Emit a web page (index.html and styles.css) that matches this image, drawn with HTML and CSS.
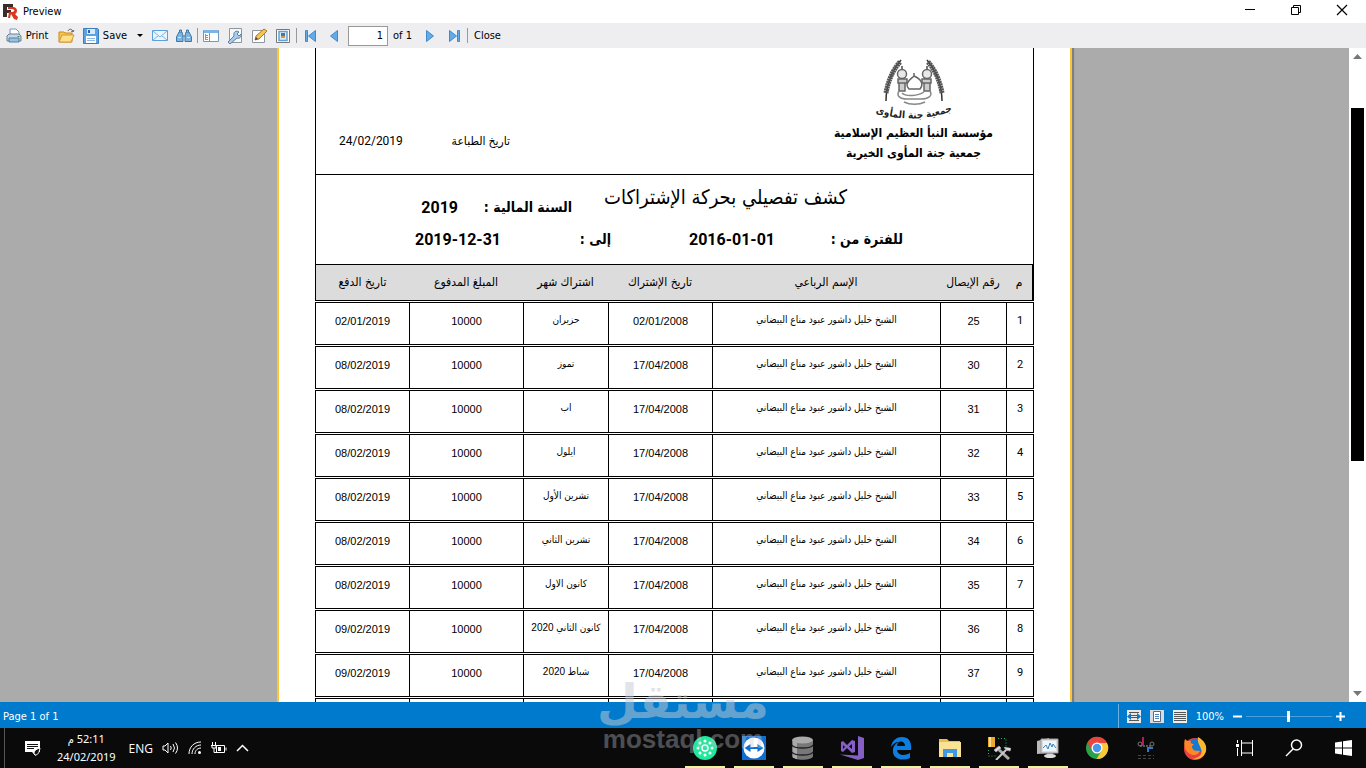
FILE: index.html
```html
<!DOCTYPE html>
<html lang="en">
<head>
  <meta charset="UTF-8">
  <meta name="viewport" content="width=device-width, initial-scale=1.0">
  <title>Preview</title>
  <link rel="stylesheet" href="styles.css">
</head>
<body>
  <!-- Window title -->
  <header class="titlebar">
    <svg class="app-icon" width="16" height="16" viewBox="0 0 16 16"><path d="M0 0h10v3H4v3h4v3H4v4H0z" fill="#3b2b2b"/><path d="M5 3h5c5 0 5 6 2 7l3 3-1 3-3-1-3-5-1 4H5l1-6h3c3 0 3-3 0-3H5z" fill="#d9381e"/></svg>
    <h1>Preview</h1>
    <div class="window-buttons">
      <button aria-label="Minimize"><svg width="12" height="12" viewBox="0 0 12 12"><path d="M1 5.500h10" stroke="#000"/></svg></button>
      <button aria-label="Restore"><svg width="12" height="12" viewBox="0 0 12 12" fill="none" stroke="#000"><path d="M1.500 3.500h7v7h-7zM3.500 3.500v-2h7v7h-2"/></svg></button>
      <button aria-label="Close window"><svg width="12" height="12" viewBox="0 0 12 12"><path d="M1 1l10 10M11 1L1 11" stroke="#000" stroke-width="1.200"/></svg></button>
    </div>
  </header>

  <!-- Preview toolbar -->
  <div class="toolbar">
    <button class="tool-wide">
      <svg width="16" height="16" viewBox="0 0 16 16"><path d="M4 7V1h6l3 3v3" fill="#fff" stroke="#6a9cc8"/><path d="M1 8l2-2h10l2 2v5H1z" fill="#c9d6e2" stroke="#6c7f92"/><path d="M3 10h10v4H3z" fill="#8cc4ec" stroke="#5f7d99"/><path d="M11.500 8.500h2" stroke="#3d9b4a"/></svg>
      Print
    </button>
    <button class="tool" aria-label="Open"><svg width="17" height="16" viewBox="0 0 17 16"><path d="M1 14V4h5l1 1h7v9z" fill="#f7c551" stroke="#c98a1c"/><path d="M1 14l3-7h12l-3 7z" fill="#ffe08a" stroke="#d9982c"/><path d="M10 3c1-3 5-2 5 1M13 3l2 1 1-2" fill="none" stroke="#666"/></svg></button>
    <button class="tool-wide">
      <svg width="16" height="16" viewBox="0 0 16 16"><path d="M.5.5h14l1 1v14H.5z" fill="#5ba3e4" stroke="#3c7cc0"/><path d="M4 1h8v5H4z" fill="#d8ebfb"/><path d="M5 2h2v3H5z" fill="#2c62a8"/><path d="M3 8h10v7H3z" fill="#fff"/><path d="M4 10.500h8M4 12.500h8" stroke="#8cb8e2"/></svg>
      Save
    </button>
    <button class="tool-arrow" aria-label="Save options"><svg width="6" height="3" viewBox="0 0 6 3"><path d="M0 0h6L3 3z"/></svg></button>
    <button class="tool" aria-label="Send"><svg width="16" height="16" viewBox="0 0 16 16"><path d="M.5 2.500h15v10H.5z" fill="#eaf5fd" stroke="#5c9fda"/><path d="M1 3l7 6 7-6M1 12l5-4M15 12l-5-4" fill="none" stroke="#7ab3e2"/></svg></button>
    <button class="tool" aria-label="Find"><svg width="16" height="16" viewBox="0 0 16 16" fill="#7fb4de" stroke="#3f78ab"><path d="M.5 13.500V9L3 4h3l1 4v5.500zM9 13.500V8l1-4h3l2.500 5v4.500z"/><path d="M3.500 4V2h2v2M10.500 4V2h2v2M7 8h2"/><path d="M2 9.500h3M11 9.500h3" stroke="#d0e8f8"/></svg></button>
    <span class="tool-sep"></span>
    <button class="tool" aria-label="Outline"><svg width="16" height="16" viewBox="0 0 16 16"><path d="M.5 2.500h15v11H.5z" fill="#fff" stroke="#7298bd"/><path d="M1 2h14v3H1z" fill="#7db4e6"/><path d="M6.500 5v8" stroke="#7298bd"/><path d="M2.500 6v6M3 7.500h2M3 9.500h2M3 11.500h2" stroke="#8a98a5"/></svg></button>
    <button class="tool" aria-label="Page settings"><svg width="16" height="16" viewBox="0 0 16 16"><path d="M2.500.5h12v14h-12z" fill="#f6f8fa" stroke="#8f979e"/><path d="M1 14l6-6c-1-4 2-6 5-4L10 6l2 2 2-2c1 3-2 5-4 4l-7 6z" fill="#a9cdec" stroke="#5d7e9e"/></svg></button>
    <button class="tool" aria-label="Edit page"><svg width="16" height="16" viewBox="0 0 16 16"><path d="M1.500 2.500h12v12h-12z" fill="#fff" stroke="#8f979e"/><path d="M4 12l1-4 8-7 3 2-8 8z" fill="#f8c64c" stroke="#a8782a"/><path d="M4 12l1-3 2 2z" fill="#444"/></svg></button>
    <button class="tool" aria-label="Watermark"><svg width="14" height="16" viewBox="0 0 14 16"><path d="M.5 1.500h13v13H.5z" fill="#fff" stroke="#777"/><path d="M3 3.500h8v9H3z" fill="#d9ecfa" stroke="#64a0d4" stroke-width="1.500"/><path d="M5 5h4v3H5z" fill="#4a75a0"/><path d="M5 8h4v2H5z" fill="#d59b36"/></svg></button>
    <span class="tool-sep"></span>
    <button class="tool" aria-label="First page"><svg width="11" height="12" viewBox="0 0 11 12" fill="#63aae8" stroke="#4189cc"><path d="M.5.5h2v11h-2zM10.500.5v11L3.500 6z"/></svg></button>
    <button class="tool" aria-label="Previous page"><svg width="8" height="12" viewBox="0 0 8 12"><path d="M7.500.5v11L.5 6z" fill="#63aae8" stroke="#4189cc"/></svg></button>
    <input class="page-number" id="pageNumber" type="text" value="1">
    <label class="page-total" for="pageNumber">of 1</label>
    <button class="tool" aria-label="Next page"><svg width="8" height="12" viewBox="0 0 8 12"><path d="M.5.5v11l7-5.500z" fill="#63aae8" stroke="#4189cc"/></svg></button>
    <button class="tool" aria-label="Last page"><svg width="11" height="12" viewBox="0 0 11 12" fill="#63aae8" stroke="#4189cc"><path d="M8.500.5h2v11h-2zM.5.5v11l7-5.500z"/></svg></button>
    <span class="tool-sep"></span>
    <button class="tool-close">Close</button>
  </div>

  <!-- Report page -->
  <main class="viewer">
    <div class="canvas">
      <div class="paper">
        <article class="report" lang="ar" dir="rtl">
          <section class="report-head">
            <div class="organisation">
              <svg width="78" height="62" viewBox="0 0 78 62" fill="none" stroke="#666">
                <path d="M26 1C17 12 11 26 11 42M52 1c9 11 15 25 15 41" stroke="#333" stroke-width="1.500"/>
                <path d="M25 3C17 12 13 23 11 34M53 3c8 9 12 20 14 31" stroke="#555" stroke-width="5" stroke-dasharray="2 .5"/>
                <path d="M27 7v3M52 7v3" stroke="#777" stroke-width="2"/>
                <circle cx="27" cy="15" r="4.500" fill="#e8e8e8" stroke-width="1.500"/><circle cx="52" cy="15" r="4.500" fill="#e8e8e8" stroke-width="1.500"/>
                <path d="M23 20h9v4h-9zM47 20h9v4h-9zM24 24v8h6v-8M49 24v8h6v-8" fill="#ccc" stroke-width="1.500"/>
                <path d="M39 14v3c-3 3-7 5-7 9 0 2 1 3 2 4h11c4-5 1-10-6-13" stroke-width="1.500"/>
                <path d="M24 32c-3 5 1 8 8 8h14c7 0 12-3 9-8M27 34c4 4 16 3 22-1M29 43c6 3 15 3 21 0" stroke="#888" stroke-width="1.500"/>
                <path id="logoArc" d="M-4 52Q39 68 82 50" stroke="none"/>
                <text class="logo-text" fill="#222" stroke="none" text-anchor="middle"><textPath href="#logoArc" startOffset="50%">جمعية جنة المأوى</textPath></text>
              </svg>
              <p>مؤسسة النبأ العظيم الإسلامية</p>
              <p>جمعية جنة المأوى الخيرية</p>
            </div>
            <div class="print-date">
              <span>تاريخ الطباعة</span>
              <span>24/02/2019</span>
            </div>
          </section>

          <section class="report-title">
            <div class="title-row">
              <h2>كشف تفصيلي بحركة الإشتراكات</h2>
              <b>السنة المالية :</b>
              <b class="value">2019</b>
            </div>
            <div class="period-row">
              <b>للفترة من :</b>
              <b class="value"><bdi dir="ltr">2016-01-01</bdi></b>
              <b>إلى :</b>
              <b class="value"><bdi dir="ltr">2019-12-31</bdi></b>
            </div>
          </section>

          <table class="payments">
            <colgroup>
              <col class="col-index"><col class="col-receipt"><col class="col-name"><col class="col-joined"><col class="col-month"><col class="col-amount"><col class="col-paid">
            </colgroup>
            <thead>
              <tr><th>م</th><th>رقم الإيصال</th><th>الإسم الرباعي</th><th>تاريخ الإشتراك</th><th>اشتراك شهر</th><th>المبلغ المدفوع</th><th>تاريخ الدفع</th></tr>
            </thead>
            <tbody>
              <tr><td>1</td><td>25</td><td>الشيخ خليل داشور عبود مناع البيضاني</td><td>02/01/2008</td><td>حزيران</td><td>10000</td><td>02/01/2019</td></tr>
              <tr><td>2</td><td>30</td><td>الشيخ خليل داشور عبود مناع البيضاني</td><td>17/04/2008</td><td>تموز</td><td>10000</td><td>08/02/2019</td></tr>
              <tr><td>3</td><td>31</td><td>الشيخ خليل داشور عبود مناع البيضاني</td><td>17/04/2008</td><td>اب</td><td>10000</td><td>08/02/2019</td></tr>
              <tr><td>4</td><td>32</td><td>الشيخ خليل داشور عبود مناع البيضاني</td><td>17/04/2008</td><td>ايلول</td><td>10000</td><td>08/02/2019</td></tr>
              <tr><td>5</td><td>33</td><td>الشيخ خليل داشور عبود مناع البيضاني</td><td>17/04/2008</td><td>تشرين الأول</td><td>10000</td><td>08/02/2019</td></tr>
              <tr><td>6</td><td>34</td><td>الشيخ خليل داشور عبود مناع البيضاني</td><td>17/04/2008</td><td>تشرين الثاني</td><td>10000</td><td>08/02/2019</td></tr>
              <tr><td>7</td><td>35</td><td>الشيخ خليل داشور عبود مناع البيضاني</td><td>17/04/2008</td><td>كانون الاول</td><td>10000</td><td>08/02/2019</td></tr>
              <tr><td>8</td><td>36</td><td>الشيخ خليل داشور عبود مناع البيضاني</td><td>17/04/2008</td><td>كانون الثاني 2020</td><td>10000</td><td>09/02/2019</td></tr>
              <tr><td>9</td><td>37</td><td>الشيخ خليل داشور عبود مناع البيضاني</td><td>17/04/2008</td><td>شباط 2020</td><td>10000</td><td>09/02/2019</td></tr>
              <tr><td></td><td></td><td></td><td></td><td></td><td></td><td></td></tr>
            </tbody>
          </table>
        </article>
      </div>
    </div>
    <div class="scrollbar">
      <svg width="9" height="5" viewBox="0 0 9 5"><path d="M0 5h9L4.500 0z" fill="#777"/></svg>
      <span class="scroll-thumb"></span>
      <svg width="9" height="5" viewBox="0 0 9 5"><path d="M0 0h9L4.500 5z" fill="#777"/></svg>
    </div>
  </main>

  <!-- Status bar -->
  <footer class="statusbar">
    <span>Page 1 of 1</span>
    <div class="zoom-tools">
      <button aria-label="Page width"><svg width="14" height="13" viewBox="0 0 14 13"><path d="M0 0h14v13H0z" fill="#e8e8e8"/><path d="M2 2.500h10M4 5.500h6M4 7.500h6M2 10.500h10" stroke="#555"/><path d="M0 6.500L4 3v7zM14 6.500L10 3v7z" fill="#1474c4"/></svg></button>
      <button aria-label="Whole page"><svg width="14" height="13" viewBox="0 0 14 13"><path d="M0 0h14v13H0z" fill="#d4dde6"/><path d="M3.500 1.500h7v10h-7z" fill="#fff" stroke="#667"/><path d="M5 4.500h4M5 6.500h4M5 8.500h4" stroke="#4c7fb5"/></svg></button>
      <button aria-label="Actual size"><svg width="14" height="13" viewBox="0 0 14 13"><path d="M0 0h14v13H0z" fill="#eee"/><path d="M1 2.500h12M1 4.500h12M1 6.500h12M1 8.500h12M1 10.500h12" stroke="#555"/></svg></button>
      <label for="zoomRange">100%</label>
      <button class="zoom-step" aria-label="Zoom out"><svg width="9" height="9" viewBox="0 0 9 9"><path d="M0 4.500h9" stroke="#fff" stroke-width="2"/></svg></button>
      <input id="zoomRange" type="range" min="0" max="200" value="98">
      <button class="zoom-step" aria-label="Zoom in"><svg width="9" height="9" viewBox="0 0 9 9"><path d="M0 4.500h9M4.500 0v9" stroke="#fff" stroke-width="2"/></svg></button>
    </div>
  </footer>

  <!-- Windows taskbar -->
  <nav class="taskbar">
    <div class="tray">
      <button class="tray-notes" aria-label="Notifications"><svg width="18" height="17" viewBox="0 0 18 17"><path d="M1 1h15v11h-4v4l-4-4H1z" fill="#fff"/><path d="M3 4.500h11M3 6.500h11M3 8.500h7" stroke="#111"/><path d="M10 14c0-4 3-5 6-6-1 5-2 7-5 7z" fill="#111" stroke="#fff"/></svg></button>
      <div class="clock">
        <span dir="rtl">52:11 م</span>
        <span>24/02/2019</span>
      </div>
      <span class="language">ENG</span>
      <button aria-label="Volume"><svg width="17" height="14" viewBox="0 0 17 14" fill="none" stroke="#fff"><path d="M1 5h2l3-3v10L3 9H1zM8.500 5q1.500 2 0 4M11 3q3 4 0 8M13.500 1.500q4 5.500 0 11"/></svg></button>
      <button aria-label="Network"><svg width="14" height="14" viewBox="0 0 14 14" fill="none" stroke="#fff"><path d="M1 13C1 6 6 1 13 1M4 13c0-5 4-9 9-9M7 13c0-4 3-6 6-6"/><circle cx="11.500" cy="11.500" r="1.500" fill="#fff" stroke="none"/></svg></button>
      <button aria-label="Battery"><svg width="16" height="13" viewBox="0 0 16 13" fill="none" stroke="#fff"><path d="M5.500 3.500h8v7h-8zM15 5.500v3M1.500 0v3M4.500 0v3M0 3.500h6M1 4v2h4V4M3 6v4.500h3"/><path d="M7 5h3v4H7z" fill="#fff" stroke="none"/></svg></button>
      <button aria-label="Hidden icons"><svg width="13" height="8" viewBox="0 0 13 8"><path d="M1 7l5.500-5.500L12 7" fill="none" stroke="#fff" stroke-width="1.500"/></svg></button>
    </div>
    <div class="apps">
      <button class="running" aria-label="Contacts"><svg width="24" height="24" viewBox="0 0 24 24"><circle cx="12" cy="12" r="12" fill="#21e89c"/><circle cx="12" cy="12" r="3" fill="none" stroke="#fff" stroke-width="1.500"/><path d="M12 5v0M17 7v0M19 12v0M17 17v0M12 19v0M7 17v0M5 12v0M7 7v0" stroke="#fff" stroke-width="3" stroke-linecap="round"/></svg></button>
      <button class="running" aria-label="TeamViewer"><svg width="24" height="24" viewBox="0 0 24 24"><path d="M0 0h24v24H0z" fill="#0f6fd0"/><circle cx="12" cy="12" r="10.500" fill="#fff"/><path d="M2.500 12l6-4v3h7V8l6 4-6 4v-3h-7v3z" fill="#0f6fd0"/></svg></button>
      <button class="running" aria-label="Database"><svg width="24" height="24" viewBox="0 0 24 24"><path d="M1 4v16c0 5 21 5 21 0V4z" fill="#777"/><path d="M3 5v17M5 6v17" stroke="#ddd"/><ellipse cx="11.500" cy="4" rx="10.500" ry="3.500" fill="#aaa"/><path d="M1 9c2 4 19 4 21 0M1 16c2 4 19 4 21 0" fill="none" stroke="#222" stroke-width="1.500"/></svg></button>
      <button class="running" aria-label="Visual Studio"><svg width="24" height="24" viewBox="0 0 24 24" fill="#865fc5"><path d="M18 0l6 2v20l-6 2-18-5.500 18 1zM1 6l2-1 4 4 5-5 3 1v11l-3 1-5-5-4 4-2-1zm2 3v4l2-2zm9-1L9 10.500l3 2.500z" fill-rule="evenodd"/></svg></button>
      <button class="running" aria-label="Edge"><svg width="24" height="24" viewBox="0 0 24 24"><path d="M2 11C3 4 8 1 13 1c7 0 10 5 9 13H8c1 6 8 6 13 3v5C12 26 3 22 4 14c0-4 3-7 6-8C6 6 4 8 2 11zm6-1h8c0-6-8-6-8 0z" fill="#0c7ee0" fill-rule="evenodd"/></svg></button>
      <button class="running" aria-label="File Explorer"><svg width="24" height="24" viewBox="0 0 24 24"><path d="M1 3h8l2 2h11v16H1z" fill="#e8bf4c"/><path d="M1 6h22v15H1z" fill="#f9e293"/><path d="M5 21v-8h14v8h-4v-4H9v4z" fill="#3e98e2"/></svg></button>
      <button class="running" aria-label="Database tools"><svg width="24" height="24" viewBox="0 0 24 24"><path d="M1 1h7v10H1z" fill="#eca92e"/><path d="M3 1v10" stroke="#ffdf8e" stroke-width="2"/><path d="M11 2.500h8v8M1.500 14v6h8" stroke="#38a968" fill="none" stroke-dasharray="1 2"/><path d="M10 12l12 11" stroke="#aaa" stroke-width="3"/><path d="M9 24l11-11" stroke="#c9c9c9" stroke-width="2"/><path d="M7 14l5-4 2 2-5 4zM17 11l2 3 4 1 1-3" fill="#ddd" stroke="#999"/></svg></button>
      <button class="running" aria-label="Performance monitor"><svg width="24" height="24" viewBox="0 0 24 24"><path d="M1 5l12-3v15l-12 1z" fill="#bbb"/><path d="M5 3h17v14H5z" fill="#ddd" stroke="#999"/><path d="M7 5h13v10H7z" fill="#edf5fb"/><path d="M7 12l3-3 2 4 2-6 2 4 1-3 3 4" fill="none" stroke="#3c83c4"/><path d="M11 17h6l1 3h-8z" fill="#999"/><ellipse cx="14" cy="20" rx="6" ry="2" fill="#ddd"/></svg></button>
      <button aria-label="Chrome"><svg width="24" height="24" viewBox="0 0 24 24"><circle cx="12" cy="12" r="11" fill="#2ba14b"/><path d="M2.500 6.500a11 11 0 0 1 19.500.5H12l-5 8z" fill="#e8453c"/><path d="M22 7a11 11 0 0 1-10.500 16L17 14l-2-7z" fill="#fbc934"/><circle cx="12" cy="12" r="5.500" fill="#fff"/><circle cx="12" cy="12" r="4.200" fill="#4598ee"/></svg></button>
      <button aria-label="Snipping tool"><svg width="24" height="24" viewBox="0 0 24 24" fill="none"><path d="M9 1v9" stroke="#b41b52" stroke-width="2"/><path d="M6 10h12" stroke="#555" stroke-width="2" stroke-dasharray="2 1"/><circle cx="6" cy="8" r="2" stroke="#777"/><circle cx="18" cy="8" r="2" stroke="#777"/><path d="M14 16v-4h5" stroke="#287bd0" stroke-width="2"/><path d="M4 19.500h16M4 22.500h16" stroke="#444" stroke-dasharray="3 2"/></svg></button>
      <button aria-label="Firefox"><svg width="24" height="24" viewBox="0 0 24 24"><circle cx="12" cy="13" r="11" fill="#ec3f42"/><circle cx="13" cy="10" r="7.500" fill="#1679d4"/><path d="M15 1c7 4 9 9 8 14-2 7-8 9-14 8 8-1 11-6 9-10-1-4-4-6-3-12z" fill="#ffb72e"/><path d="M2 3c2 2 3 2 6 2-1 2 0 3 3 3-2 2-3 3-1 5 2 3 5 1 7 2-2 4-6 5-10 3-5-3-7-9-5-15z" fill="#ff8825"/></svg></button>
      <button class="white-icon" aria-label="Task view"><svg width="18" height="18" viewBox="0 0 18 18" fill="none" stroke="#fff"><path d="M1.500 1v3M1.500 9v8" /><path d="M0 5h3v3H0z" fill="#fff" stroke="none"/><path d="M5.500 1v3h11V1M5.500 4v10M16.500 4v10M5.500 17v-3h11v3"/></svg></button>
      <button class="white-icon" aria-label="Search"><svg width="18" height="18" viewBox="0 0 18 18" fill="none" stroke="#fff" stroke-width="1.500"><circle cx="11.500" cy="6" r="5"/><path d="M8 10l-7 7"/></svg></button>
      <button class="white-icon" aria-label="Start"><svg width="17" height="16" viewBox="0 0 17 16" fill="#fff"><path d="M0 2.500L7 1.500v6H0zM8 1.300L17 0v7.500H8zM0 8.500h7v6l-7-1zM8 8.500h9V16l-9-1.300z"/></svg></button>
    </div>
  </nav>

  <!-- Site watermark -->
  <div class="watermark">
    <span lang="ar">مستقل</span>
    <span>mostaql.com</span>
  </div>
</body>
</html>
```
FILE: styles.css
```css
* {
  margin: 0;
  padding: 0;
  box-sizing: border-box;
}

body {
  font-family: "DejaVu Sans Condensed", "DejaVu Sans", sans-serif;
  font-size: 11px;
  color: #000;
  display: flex;
  flex-direction: column;
  height: 100vh;
  overflow: hidden;
  position: relative;
}

button {
  font: inherit;
  color: inherit;
  background: none;
  border: none;
  display: flex;
  align-items: center;
  justify-content: center;
}

svg {
  flex: none;
}

/* Title bar */
.titlebar {
  height: 23px;
  background-color: white;
  display: flex;
  align-items: center;
  padding-left: 3px;
}

.titlebar h1 {
  font-size: 11px;
  font-weight: normal;
  margin-left: 4px;
}

.window-buttons {
  display: flex;
  align-self: flex-start;
  margin-left: auto;
  padding-right: 1px;
}

.window-buttons button {
  width: 46px;
  height: 20px;
}

/* Toolbar */
.toolbar {
  height: 25px;
  background-color: #eeeef0;
  display: flex;
  align-items: center;
}

.tool-wide {
  width: 54px;
  gap: 4px;
}

.tool {
  width: 24px;
  height: 24px;
}

.tool-arrow {
  width: 16px;
  height: 24px;
}

.tool-sep {
  width: 1px;
  height: 15px;
  margin: 0 1px;
  background-color: #999;
}

.page-number {
  width: 40px;
  height: 20px;
  margin-left: 2px;
  padding-right: 4px;
  border: 1px solid #999;
  background-color: white;
  font: inherit;
  text-align: right;
}

.page-total {
  width: 30px;
  padding-left: 5px;
}

.tool-close {
  padding: 0 5px;
}

/* Viewer */
.viewer {
  flex: 1;
  min-height: 0;
  display: flex;
}

.canvas {
  flex: 1;
  display: flex;
  justify-content: center;
  align-items: flex-start;
  background-color: #ababab;
  overflow: hidden;
}

.paper {
  width: 100%;
  max-width: 795px;
  padding: 0 36px;
  background-color: white;
  border: solid #fdc536;
  border-width: 0 2px;
  box-shadow: 2px 0 1px #808080;
}

.scrollbar {
  width: 17px;
  background-color: white;
  display: flex;
  flex-direction: column;
  align-items: center;
  padding: 6px 0;
}

.scroll-thumb {
  width: 13px;
  height: 55%;
  margin: 49px 0 auto;
  background-color: black;
}

/* Report */
.report-head,
.report-title {
  border: solid black;
  border-width: 0 1px 1px;
}

.report-head {
  height: 127px;
  display: flex;
  justify-content: space-between;
  padding: 11px 40px 0 23px;
}

.organisation {
  text-align: center;
  font-size: 12px;
  font-weight: bold;
  line-height: 20px;
}

.organisation svg {
  display: block;
  margin: 0 auto 2px;
}

.logo-text {
  font-size: 10px;
}

.print-date {
  width: 171px;
  display: flex;
  justify-content: space-between;
  padding-top: 75px;
  font-family: Roboto, "DejaVu Sans Condensed", sans-serif;
  font-size: 12px;
}

.report-title {
  height: 90px;
  font-size: 14px;
}

.title-row,
.period-row {
  display: grid;
  align-items: center;
  white-space: nowrap;
}

.title-row {
  grid-template-columns: 275px 114px 1fr;
  padding: 16px 186px 0 0;
  height: 48px;
}

.title-row h2 {
  font-size: 20px;
  font-weight: normal;
  line-height: 20px;
  align-self: start;
  margin-top: -4px;
}

.period-row {
  grid-template-columns: 128px 164px 110px 1fr;
  padding-right: 130px;
  height: 32px;
}

.value {
  font-family: Roboto, sans-serif;
  font-size: 16px;
}

.payments {
  width: 100%;
  table-layout: fixed;
  border-collapse: separate;
  border-spacing: 0 1px;
  margin-top: -1px;
}

.col-index { width: 28px; }
.col-receipt { width: 66px; }
.col-joined { width: 104px; }
.col-month { width: 85px; }
.col-amount { width: 114px; }
.col-paid { width: 94px; }

.payments th {
  height: 36px;
  padding-bottom: 2px;
  background-color: #dcdcdc;
  border-bottom: 1px solid black;
  font-size: 12px;
  font-weight: normal;
  white-space: nowrap;
}

.payments th:first-child {
  border-right: 2px solid black;
}

.payments th:last-child {
  border-left: 1px solid black;
}

.payments td {
  height: 43px;
  padding: 0 0 6px;
  border: solid black;
  border-width: 1px 0 1px 1px;
  font-family: "Liberation Sans", "DejaVu Sans Condensed", sans-serif;
  font-size: 11px;
  text-align: center;
  white-space: nowrap;
}

.payments td:first-child {
  border-right-width: 1px;
  font-family: Roboto, sans-serif;
}

.payments td:nth-child(3),
.payments td:nth-child(5) {
  padding-bottom: 8px;
  font-size: 10px;
}

/* Status bar */
.statusbar {
  height: 26px;
  background-color: #007acc;
  color: white;
  display: flex;
  align-items: center;
  padding: 2px 21px 0 3px;
}

.zoom-tools {
  display: flex;
  align-items: center;
  margin-left: auto;
  padding-left: 8px;
  gap: 9px;
  height: 24px;
  border-left: 1px solid #6bb0e0;
}

.zoom-tools input {
  appearance: none;
  width: 86px;
  height: 12px;
  margin: 0 -5px;
  background: linear-gradient(#4aa0dc, #4aa0dc) center / 100% 1px no-repeat;
}

.zoom-tools input::-webkit-slider-thumb {
  appearance: none;
  width: 3px;
  height: 11px;
  background-color: white;
}

/* Taskbar */
.taskbar {
  height: 40px;
  background-color: #0a0a0a;
  color: white;
  display: flex;
  justify-content: space-between;
  padding-left: 4px;
}

.tray {
  display: flex;
  align-items: center;
  gap: 9px;
  padding-left: 19px;
  border-left: 1px solid #555;
  font-family: "Open Sans", "DejaVu Sans Condensed", sans-serif;
  font-size: 12px;
}

.clock {
  display: flex;
  flex-direction: column;
  align-items: center;
  margin-left: 6px;
  font-family: "Noto Sans", "DejaVu Sans Condensed", sans-serif;
  font-size: 11px;
  line-height: 18px;
}

.language {
  margin-left: 4px;
}

.apps {
  display: flex;
}

.apps button {
  width: 49px;
}

.apps .white-icon {
  padding-left: 3px;
}

.apps .running {
  background: linear-gradient(#eef29c, #eef29c) bottom / 40px 2px no-repeat;
}

/* Watermark */
.watermark {
  position: absolute;
  left: 600px;
  bottom: 14px;
  width: 166px;
  display: flex;
  flex-direction: column;
  align-items: center;
  color: #c8cad4;
  opacity: 0.5;
  font-weight: bold;
  pointer-events: none;
}

.watermark span:first-child {
  font-family: "DejaVu Sans", sans-serif;
  font-size: 47px;
  line-height: 44px;
}

.watermark span:last-child {
  font-family: "Liberation Sans", sans-serif;
  font-size: 26px;
  line-height: 30px;
  opacity: 0.7;
}
```
